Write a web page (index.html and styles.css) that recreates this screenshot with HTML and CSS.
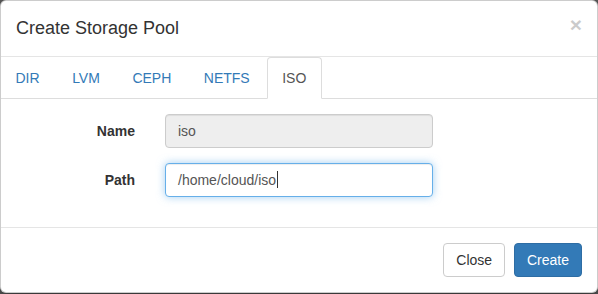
FILE: index.html
```html
<!DOCTYPE html>
<html lang="en">
<head>
    <meta charset="UTF-8" />
    <title>Create Storage Pool</title>
    <link rel="stylesheet" href="styles.css">
</head>
<body>
    <div class="modal">
        <div class="modal-header">
            <h4 class="modal-title">Create Storage Pool</h4>
            <button class="close" type="button">&times;</button>
        </div>

        <ul class="nav-tabs">
            <li><a href="#">DIR</a></li>
            <li><a href="#">LVM</a></li>
            <li><a href="#">CEPH</a></li>
            <li><a href="#">NETFS</a></li>
            <li class="active"><a href="#">ISO</a></li>
        </ul>

        <div class="modal-body">
            <div class="form-group">
                <label class="control-label" for="poolName">Name</label>
                <div class="control-wrap">
                    <input id="poolName" class="form-control" type="text" value="iso" disabled />
                </div>
            </div>
            <div class="form-group">
                <label class="control-label" for="poolPath">Path</label>
                <div class="control-wrap">
                    <div class="form-control is-focus" id="poolPath">/home/cloud/iso<span class="caret"></span></div>
                </div>
            </div>
        </div>

        <div class="modal-footer">
            <button class="btn btn-default" type="button">Close</button>
            <button class="btn btn-primary" type="button">Create</button>
        </div>
    </div>
</body>
</html>
```

FILE: styles.css
```css
html, body {
    margin: 0; padding: 0; height: 100%;
    background: #5a5a5a;
    font-family: 'Liberation Sans', Arial, sans-serif;
    font-size: 14px;
    color: #333;
}

.modal {
    background: #fff;
    width: 598px;
    box-sizing: border-box;
    border: 1px solid rgba(0,0,0,0.2);
    border-radius: 6px;
    box-shadow: 0 5px 15px rgba(0,0,0,0.5);
}

.modal-header {
    display: flex;
    justify-content: space-between;
    align-items: flex-start;
    padding: 15px;
    border-bottom: 1px solid #e5e5e5;
}

.modal-title {
    margin: 0;
    font-size: 18px;
    font-weight: 500;
    line-height: 25px;
}

.close {
    margin-top: -2px;
    padding: 0;
    border: none;
    background: transparent;
    font-family: 'Liberation Sans', Arial, sans-serif;
    font-size: 21px;
    font-weight: 700;
    line-height: 1;
    color: #000;
    opacity: 0.2;
    text-shadow: 0 1px 0 #fff;
    cursor: pointer;
}

.nav-tabs {
    display: flex;
    margin: 0;
    padding: 0;
    list-style: none;
    border-bottom: 1px solid #ddd;
}

.nav-tabs li {
    margin-right: 2px;
    margin-bottom: -1px;
}

.nav-tabs a {
    display: block;
    padding: 10px 14.25px;
    line-height: 20px;
    color: #337ab7;
    text-decoration: none;
    border: 1px solid transparent;
    border-radius: 4px 4px 0 0;
}

.nav-tabs li:first-child a {
    padding-left: 13.5px;
}

.nav-tabs .active a {
    color: #555;
    background: #fff;
    border-color: #ddd;
    border-bottom-color: transparent;
}

.modal-body {
    padding: 15px 0;
}

.form-group {
    display: flex;
    margin-bottom: 15px;
}

.control-label {
    width: 25%;
    box-sizing: border-box;
    padding: 7px 15px 0;
    text-align: right;
    font-weight: 700;
    line-height: 20px;
}

.control-wrap {
    width: 50%;
    box-sizing: border-box;
    padding: 0 15px;
}

.form-control {
    display: block;
    width: 100%;
    height: 34px;
    box-sizing: border-box;
    padding: 6px 12px;
    font-family: inherit;
    font-size: 14px;
    line-height: 20px;
    color: #555;
    background: #fff;
    border: 1px solid #ccc;
    border-radius: 4px;
    box-shadow: inset 0 1px 1px rgba(0,0,0,0.075);
}

.form-control[disabled] {
    background: #eee;
    opacity: 1;
}

.form-control.is-focus {
    border-color: #66afe9;
    box-shadow: inset 0 1px 1px rgba(0,0,0,0.075), 0 0 8px rgba(102,175,233,0.6);
}

.caret {
    display: inline-block;
    width: 1px;
    height: 17px;
    margin-left: 1px;
    vertical-align: -3px;
    background: #333;
}

.modal-footer {
    padding: 15px;
    text-align: right;
    border-top: 1px solid #e5e5e5;
}

.btn {
    display: inline-block;
    padding: 6px 12px;
    font-family: inherit;
    font-size: 14px;
    line-height: 20px;
    border: 1px solid transparent;
    border-radius: 4px;
    cursor: pointer;
}

.btn + .btn {
    margin-left: 5px;
}

.btn-default {
    color: #333;
    background: #fff;
    border-color: #ccc;
}

.btn-primary {
    color: #fff;
    background: #337ab7;
    border-color: #2e6da4;
}
```
